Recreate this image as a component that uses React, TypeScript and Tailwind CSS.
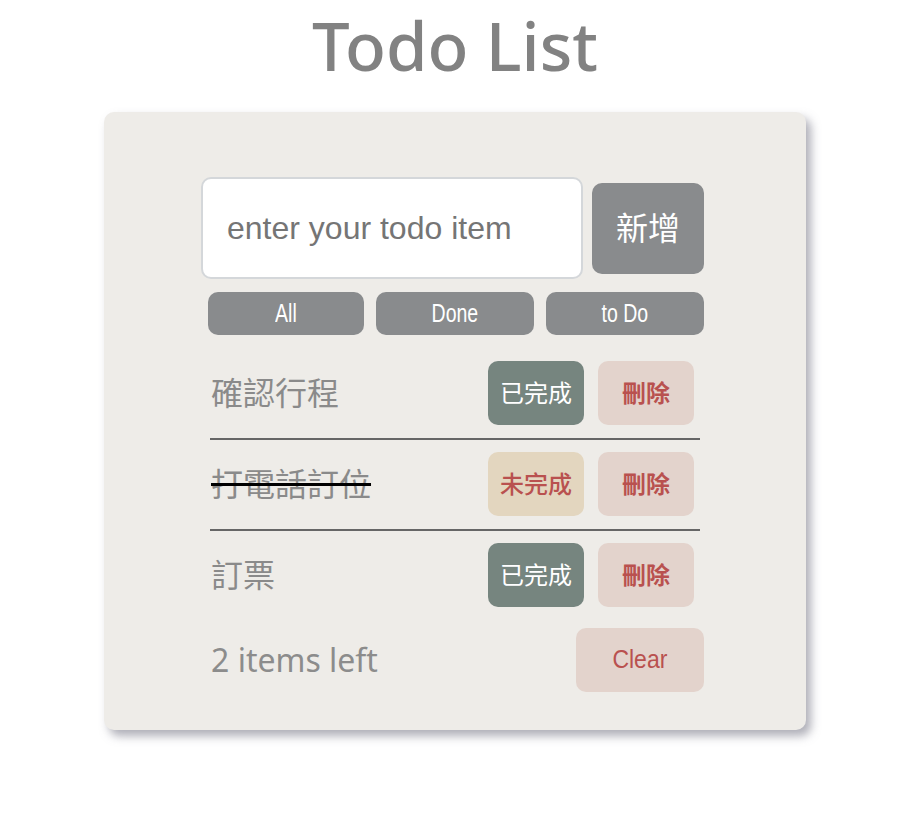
import { useState } from "react";

type Todo = {
  id: number;
  text: string;
  done: boolean;
};

const initialTodos: Todo[] = [
  { id: 1, text: "確認行程", done: false },
  { id: 2, text: "打電話訂位", done: true },
  { id: 3, text: "訂票", done: false },
];

const cjk = "font-['Noto_Sans','Noto_Sans_CJK_TC',sans-serif]";
const arial = "font-['Liberation_Sans','Noto_Sans_CJK_TC',sans-serif]";

export default function App() {
  const [todos, setTodos] = useState<Todo[]>(initialTodos);
  const [input, setInput] = useState("");

  const left = todos.filter((t) => !t.done).length;

  return (
    <div className="min-h-[834px] bg-white flex flex-col items-center pl-2">
      {/* Title */}
      <h1
        className={`${cjk} mt-[12px] h-[66px] leading-[66px] text-[67px] font-medium text-[#828282]`}
      >
        Todo List
      </h1>

      {/* Card */}
      <div className="mt-[34px] w-[702px] rounded-[10px] bg-[#eeece8] pl-[97px] pr-[102px] pt-[65px] pb-[38px] shadow-[5px_6px_10px_rgba(110,110,125,0.55)]">
        {/* Input row */}
        <div className="flex items-center gap-[9px]">
          <input
            value={input}
            onChange={(e) => setInput(e.target.value)}
            placeholder="enter your todo item"
            className={`${arial} h-[102px] w-[382px] rounded-[10px] border-2 border-[#d4d7da] bg-white px-6 text-[32px] text-[#555] placeholder:text-[#757575] outline-none`}
          />
          <button
            className={`${cjk} h-[91px] w-[112px] rounded-[10px] bg-[#898b8d] text-[32px] text-white`}
          >
            新增
          </button>
        </div>

        {/* Filters */}
        <div className={`${arial} mt-[13px] ml-[7px] flex gap-[12px] text-[25px] text-white`}>
          {["All", "Done", "to Do"].map((label, i) => (
            <button
              key={label}
              className={`h-[43px] ${i === 0 ? "w-[156px]" : "w-[158px]"} rounded-[10px] bg-[#898b8d] leading-none`}
            >
              <span className="inline-block scale-x-[0.78]">{label}</span>
            </button>
          ))}
        </div>

        {/* Items */}
        <ul className="mt-[14px] ml-[9px] w-[490px]">
          {todos.map((todo, i) => (
            <li
              key={todo.id}
              className={`flex items-center justify-between pt-[12px] pb-[13px] ${
                i < todos.length - 1 ? "border-b-2 border-[#666]" : ""
              }`}
            >
              <span
                className={`${cjk} pl-[1px] text-[32px] leading-none text-[#8a8a8a] ${
                  todo.done ? "line-through decoration-black decoration-[3px]" : ""
                }`}
              >
                {todo.text}
              </span>
              <div className={`${cjk} mr-[6px] flex gap-[14px] text-[24px]`}>
                {todo.done ? (
                  <button
                    onClick={() =>
                      setTodos((prev) =>
                        prev.map((t) => (t.id === todo.id ? { ...t, done: false } : t)),
                      )
                    }
                    className="h-[64px] w-[96px] rounded-[10px] bg-[#e3d6bf] font-medium text-[#b9514f]"
                  >
                    未完成
                  </button>
                ) : (
                  <button
                    onClick={() =>
                      setTodos((prev) =>
                        prev.map((t) => (t.id === todo.id ? { ...t, done: true } : t)),
                      )
                    }
                    className="h-[64px] w-[96px] rounded-[10px] bg-[#76857f] text-white"
                  >
                    已完成
                  </button>
                )}
                <button
                  onClick={() => setTodos((prev) => prev.filter((t) => t.id !== todo.id))}
                  className="h-[64px] w-[96px] rounded-[10px] bg-[#e3d3cc] font-bold text-[#b9514f]"
                >
                  刪除
                </button>
              </div>
            </li>
          ))}
        </ul>

        {/* Footer */}
        <div className="mt-[8px] flex items-center justify-between pl-[10px]">
          <span className={`${cjk} text-[32px] leading-none text-[#8c8c8c]`}>
            {left} items left
          </span>
          <button
            className={`${arial} h-[64px] w-[128px] rounded-[10px] bg-[#e3d3cc] text-[25px] text-[#b9514f]`}
          >
            <span className="inline-block scale-x-[0.92]">Clear</span>
          </button>
        </div>
      </div>
    </div>
  );
}
